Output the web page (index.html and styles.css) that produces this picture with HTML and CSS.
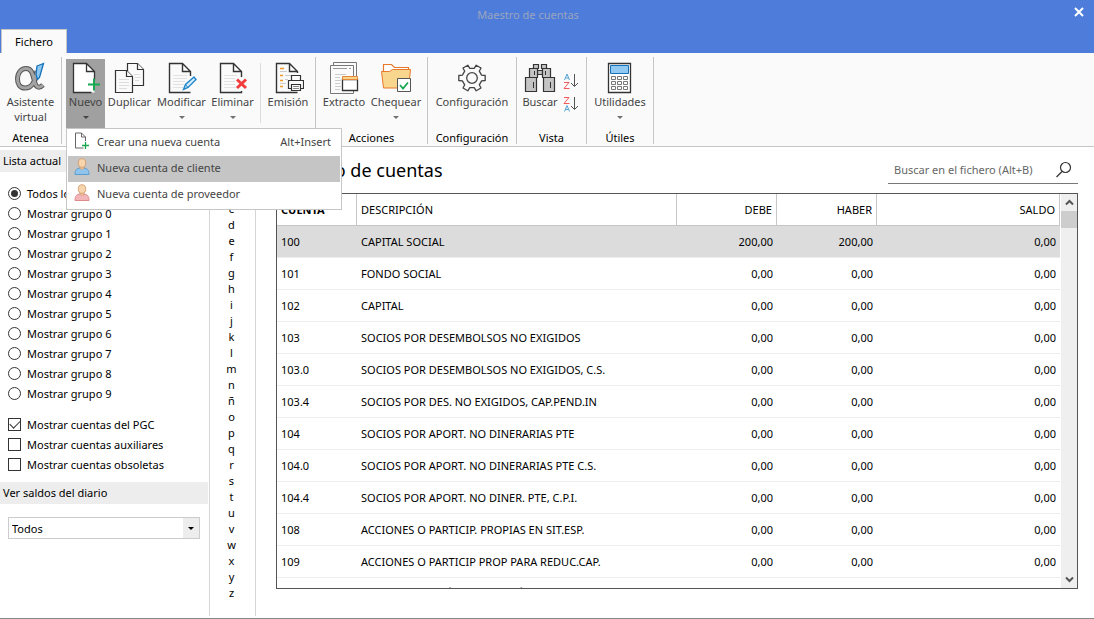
FILE: index.html
```html
<!DOCTYPE html>
<html lang="es">
<head>
<meta charset="utf-8">
<title>Maestro de cuentas</title>
<link rel="stylesheet" href="styles.css">
</head>
<body>
<header class="titlebar">
  <div class="caption">Maestro de cuentas</div>
  <button class="close" aria-label="Cerrar"><svg width="10" height="10" viewBox="0 0 10 10"><path d="M1 1l8 8M9 1l-8 8" stroke="#fff" stroke-width="2" fill="none"/></svg></button>
  <button class="tab">Fichero</button>
</header>

<nav class="ribbon">
  <section class="group g-atenea">
    <div class="tools">
      <button class="tool">
        <svg class="icon" viewBox="0 0 32 32"><path d="M22 9C20 20 17 26 10 26C5 26 2.500 22 2.500 17C2.500 11 6 6.500 11 6.500C18 6.500 18 15 20 21C21 25 24 27 28 23" fill="none" stroke="#555" stroke-width="5"/><path d="M22 9C20 20 17 26 10 26C5 26 2.500 22 2.500 17C2.500 11 6 6.500 11 6.500C18 6.500 18 15 20 21C21 25 24 27 28 23" fill="none" stroke="#a3a3a3" stroke-width="3"/><path d="M22 4l6.500-2.500-4 14-2 2-1.500-5z" fill="#8cc8f0" stroke="#1672b8" stroke-width="1.300"/></svg>
        <span>Asistente<br>virtual</span>
      </button>
    </div>
    <h2>Atenea</h2>
  </section>

  <section class="group g-edit">
    <div class="tools">
      <div class="menu-anchor">
        <button class="tool active" aria-expanded="true">
          <svg class="icon" viewBox="0 0 32 32"><path d="M3.500 1.500h13l8 8v21h-21z" fill="#fff"/><path d="M24.500 18V9.500l-8-8h-13v29h18M16.500 1.500v8h8" fill="none" stroke="#333" stroke-width="1.300"/><path d="M24 16.500v12M18 22.500h12" stroke="#18a851" stroke-width="2"/></svg>
          <span>Nuevo</span><i class="arrow"></i>
        </button>
        <div class="menu" role="menu">
          <button class="item" role="menuitem"><svg viewBox="0 0 18 18"><path d="M12.500 9V5l-4-4H2.500v15h8M8.500 1v4h4" fill="none" stroke="#666"/><path d="M12.500 10v7M9 13.500h7" stroke="#18a851" stroke-width="1.300"/></svg><span>Crear una nueva cuenta</span><kbd>Alt+Insert</kbd></button>
          <button class="item selected" role="menuitem"><svg viewBox="0 0 18 18"><path d="M2 16.500c0-5 2-6 5-6.500h4c3 .5 5 1.500 5 6.500z" fill="#8fc4ed" stroke="#5d9ed0"/><path d="M7 8v2.500q2 1.500 4 0V8z" fill="#f7d5ad" stroke="#cf9467" stroke-width=".7"/><ellipse cx="9" cy="5" rx="3.700" ry="4.300" fill="#f7d5ad" stroke="#cf9467" stroke-width=".8"/></svg><span>Nueva cuenta de cliente</span></button>
          <button class="item" role="menuitem"><svg viewBox="0 0 18 18"><path d="M2 16.500c0-5 2-6 5-6.500h4c3 .5 5 1.500 5 6.500z" fill="#f3b6b8" stroke="#df8a8d"/><path d="M7 8v2.500q2 1.500 4 0V8z" fill="#f7d5ad" stroke="#cf9467" stroke-width=".7"/><ellipse cx="9" cy="5" rx="3.700" ry="4.300" fill="#f7d5ad" stroke="#cf9467" stroke-width=".8"/></svg><span>Nueva cuenta de proveedor</span></button>
        </div>
      </div>
      <button class="tool w-dup">
        <svg class="icon" viewBox="0 0 32 32"><g fill="#fafafa" stroke="#333" stroke-width="1.200"><path d="M13.500 1.500h10l6 6v16h-16z"/><path d="M23.500 1.500v6h6"/><path d="M1.500 8.500h11l6 6v16h-17z"/><path d="M12.500 8.500v6h6"/></g><path d="M5 17.500h10M5 20.500h10M5 23.500h10M5 26.500h8M20 12.500h6M21 15.500h6M21 18.500h4" stroke="#ddd"/></svg>
        <span>Duplicar</span>
      </button>
      <button class="tool w-mod">
        <svg class="icon" viewBox="0 0 32 32"><path d="M24.500 14V9.500l-8-8h-13v29h21M16.500 1.500v8h8" fill="none" stroke="#333" stroke-width="1.400"/><path d="M7 13.500h14M7 16.500h14M7 19.500h12M7 22.500h11M7 25.500h10" stroke="#e2e2e2"/><path d="M17.500 27.500l2-5 8.500-7.500 2 2.500-8 8z" fill="#d6ecfa" stroke="#1f86ca" stroke-width="1.400"/><path d="M19.500 22.500l2.500 3" stroke="#1f86ca"/></svg>
        <span>Modificar</span><i class="arrow"></i>
      </button>
      <button class="tool w-del">
        <svg class="icon" viewBox="0 0 32 32"><path d="M24.500 15V9.500l-8-8h-13v29h21V29M16.500 1.500v8h8" fill="none" stroke="#333" stroke-width="1.400"/><path d="M7 13.500h13M7 16.500h11M7 19.500h11M7 22.500h11M7 25.500h12" stroke="#e2e2e2"/><path d="M20 17.500l9 8.500M29 17.500L20 26" stroke="#f23c3c" stroke-width="3"/></svg>
        <span>Eliminar</span><i class="arrow"></i>
      </button>
      <hr class="split">
      <button class="tool w-emi">
        <svg class="icon" viewBox="0 0 32 32"><path d="M25.500 11V9.500l-8-8h-13v29h21M17.500 1.500v8h8" fill="none" stroke="#333" stroke-width="1.400"/><path d="M8 6.500h4M8 13.500h3M8 18.500h3M8 24.500h3" stroke="#f09a28" stroke-width="1.300"/><path d="M8 9.500h7M13 13.500h6M13 17.500h3M8 21.500h6" stroke="#ccc"/><g fill="#fff" stroke="#333" stroke-width="1.200"><path d="M19.500 18.500v-5h9v5z"/><path d="M16.500 18.500h15v8h-15z"/><path d="M19.500 22.500h9v6h-9z"/></g><path d="M21 24.500h6M21 26.500h6" stroke="#888"/></svg>
        <span>Emisión</span>
      </button>
    </div>
  </section>

  <section class="group g-acc">
    <div class="tools">
      <button class="tool w-ext">
        <svg class="icon" viewBox="0 0 32 32"><g fill="#fafafa" stroke="#777"><path d="M5.500.5h23v28h-23z"/><path d="M2.500 3.500h23v28h-23z"/></g><path d="M5 6.500h14M21 6.500h2" stroke="#999"/><path d="M7 12.500h11M7 15.500h5M7 18.500h6M7 21.500h5M7 24.500h6M7 27.500h5" stroke="#ccc"/><path d="M14.500 17.500h15v11h-15z" fill="#fff" stroke="#333" stroke-width="1.300"/><path d="M14.500 14.500h15v3h-15z" fill="#f8d48b" stroke="#e5893a"/></svg>
        <span>Extracto</span>
      </button>
      <button class="tool w-che">
        <svg class="icon" viewBox="0 0 32 32"><path d="M3.500 9V2.500h8l3 3h14V9" fill="#fff" stroke="#e8792c" stroke-width="1.200"/><path d="M1.500 9.500h8l3-2h18l-2 18.500h-25z" fill="#f8d68e" stroke="#e8792c"/><path d="M17.500 16.500h13v13h-13z" fill="#fff" stroke="#555"/><path d="M20 23l3 3.500 5-6" fill="none" stroke="#18a851" stroke-width="1.800"/></svg>
        <span>Chequear</span><i class="arrow"></i>
      </button>
    </div>
    <h2>Acciones</h2>
  </section>

  <section class="group g-conf">
    <div class="tools">
      <button class="tool">
        <svg class="icon" viewBox="0 0 32 32"><g fill="none" stroke="#444" stroke-width="1.300"><circle cx="16" cy="16" r="5.300"/><path stroke-linejoin="round" d="M29.200 13.500V18.500L25.600 18.900L23.300 22.800L25 26L20.200 28.800L18.200 25.700H13.800L11.800 28.800L7 26L8.700 22.800L6.400 18.900L2.800 18.500V13.500L6.400 13.100L8.700 9.200L7 6L11.800 3.200L13.800 6.300H18.200L20.200 3.200L25 6L23.300 9.200L25.600 13.100Z"/></g></svg>
        <span>Configuración</span>
      </button>
    </div>
    <h2>Configuración</h2>
  </section>

  <section class="group g-vista">
    <div class="tools">
      <button class="tool w-bus">
        <svg class="icon" viewBox="0 0 32 32"><g fill="#c5c4c4" stroke="#333" stroke-width="1.200"><path d="M13.500 8.500h5v4h-5z"/><path d="M9.500 2.500h5v4h-5zM17.500 2.500h5v4h-5zM5.500 6.500h8v9h-8zM18.500 6.500h8v9h-8zM1.500 15.500h11v14h-11zM19.500 15.500h11v14h-11z"/></g><path d="M10.500 9v4M21.500 9v4M9.500 20v6M26.500 20v6" stroke="#333"/></svg>
        <span>Buscar</span>
      </button>
      <div class="sorts">
        <button class="sort" aria-label="Orden ascendente"><svg viewBox="0 0 16 16"><path d="M1.500 7L4 1l2.500 6M2.500 5h3" fill="none" stroke="#54a3d5"/><path d="M1 9.500h5L1 15.500h5.500" fill="none" stroke="#f05a5a"/><path d="M11.500 1v12M8 10l3.500 3.500L15 10" fill="none" stroke="#555"/></svg></button>
        <button class="sort" aria-label="Orden descendente"><svg viewBox="0 0 16 16"><path d="M1 1.500h5L1 7.500h5.500" fill="none" stroke="#f05a5a"/><path d="M1.500 15.500L4 9.500l2.500 6M2.500 13.500h3" fill="none" stroke="#54a3d5"/><path d="M11.500 1v12M8 10l3.500 3.500L15 10" fill="none" stroke="#555"/></svg></button>
      </div>
    </div>
    <h2>Vista</h2>
  </section>

  <section class="group g-util">
    <div class="tools">
      <button class="tool">
        <svg class="icon" viewBox="0 0 32 32"><path d="M4.500 1.500h22v29h-22z" fill="#fff" stroke="#333" stroke-width="1.300"/><path d="M6.500 3.500h18v8h-18z" fill="#92c9f2" stroke="#1672b8"/><g fill="none" stroke="#777"><path d="M7.500 14.500h4v3h-4zM13.500 14.500h4v3h-4zM19.500 14.500h4v3h-4zM7.500 19.500h4v3h-4zM13.500 19.500h4v3h-4zM19.500 19.500h4v3h-4zM7.500 24.500h4v3h-4zM13.500 24.500h4v3h-4zM19.500 24.500h4v3h-4z"/></g></svg>
        <span>Utilidades</span><i class="arrow"></i>
      </button>
    </div>
    <h2>Útiles</h2>
  </section>
</nav>

<main class="workspace">
  <aside class="sidebar">
    <h3 class="bar">Lista actual</h3>
    <div class="options">
      <label><input type="radio" name="grupo" checked>Todos los grupos</label>
      <label><input type="radio" name="grupo">Mostrar grupo 0</label>
      <label><input type="radio" name="grupo">Mostrar grupo 1</label>
      <label><input type="radio" name="grupo">Mostrar grupo 2</label>
      <label><input type="radio" name="grupo">Mostrar grupo 3</label>
      <label><input type="radio" name="grupo">Mostrar grupo 4</label>
      <label><input type="radio" name="grupo">Mostrar grupo 5</label>
      <label><input type="radio" name="grupo">Mostrar grupo 6</label>
      <label><input type="radio" name="grupo">Mostrar grupo 7</label>
      <label><input type="radio" name="grupo">Mostrar grupo 8</label>
      <label><input type="radio" name="grupo">Mostrar grupo 9</label>
    </div>
    <div class="options checks">
      <label><input type="checkbox" checked>Mostrar cuentas del PGC</label>
      <label><input type="checkbox">Mostrar cuentas auxiliares</label>
      <label><input type="checkbox">Mostrar cuentas obsoletas</label>
    </div>
    <h3 class="bar"><label for="saldos">Ver saldos del diario</label></h3>
    <div class="combo">
      <select id="saldos"><option>Todos</option></select>
      <i class="combo-arrow"></i>
    </div>
  </aside>

  <ul class="letters">
    <li>a</li><li>b</li><li>c</li><li>d</li><li>e</li><li>f</li><li>g</li><li>h</li><li>i</li><li>j</li><li>k</li><li>l</li><li>m</li><li>n</li><li>ñ</li><li>o</li><li>p</li><li>q</li><li>r</li><li>s</li><li>t</li><li>u</li><li>v</li><li>w</li><li>x</li><li>y</li><li>z</li>
  </ul>

  <section class="content">
    <div class="heading">
      <h1>Maestro de cuentas</h1>
      <div class="search">
        <input type="text" placeholder="Buscar en el fichero (Alt+B)" aria-label="Buscar en el fichero">
        <svg width="18" height="18" viewBox="0 0 18 18"><circle cx="10.500" cy="6.500" r="5" fill="none" stroke="#333" stroke-width="1.200"/><path d="M7 10.500L1.500 16" stroke="#333" stroke-width="1.300"/></svg>
      </div>
    </div>
    <div class="grid">
      <div class="rows">
        <table>
          <colgroup><col class="c-cuenta"><col class="c-desc"><col class="c-num"><col class="c-num"><col class="c-saldo"></colgroup>
          <thead><tr><th class="sorted">CUENTA</th><th>DESCRIPCIÓN</th><th>DEBE</th><th>HABER</th><th>SALDO</th></tr></thead>
          <tbody>
            <tr class="current"><td>100</td><td>CAPITAL SOCIAL</td><td>200,00</td><td>200,00</td><td>0,00</td></tr>
            <tr><td>101</td><td>FONDO SOCIAL</td><td>0,00</td><td>0,00</td><td>0,00</td></tr>
            <tr><td>102</td><td>CAPITAL</td><td>0,00</td><td>0,00</td><td>0,00</td></tr>
            <tr><td>103</td><td>SOCIOS POR DESEMBOLSOS NO EXIGIDOS</td><td>0,00</td><td>0,00</td><td>0,00</td></tr>
            <tr><td>103.0</td><td>SOCIOS POR DESEMBOLSOS NO EXIGIDOS, C.S.</td><td>0,00</td><td>0,00</td><td>0,00</td></tr>
            <tr><td>103.4</td><td>SOCIOS POR DES. NO EXIGIDOS, CAP.PEND.IN</td><td>0,00</td><td>0,00</td><td>0,00</td></tr>
            <tr><td>104</td><td>SOCIOS POR APORT. NO DINERARIAS PTE</td><td>0,00</td><td>0,00</td><td>0,00</td></tr>
            <tr><td>104.0</td><td>SOCIOS POR APORT. NO DINERARIAS PTE C.S.</td><td>0,00</td><td>0,00</td><td>0,00</td></tr>
            <tr><td>104.4</td><td>SOCIOS POR APORT. NO DINER. PTE, C.P.I.</td><td>0,00</td><td>0,00</td><td>0,00</td></tr>
            <tr><td>108</td><td>ACCIONES O PARTICIP. PROPIAS EN SIT.ESP.</td><td>0,00</td><td>0,00</td><td>0,00</td></tr>
            <tr><td>109</td><td>ACCIONES O PARTICIP PROP PARA REDUC.CAP.</td><td>0,00</td><td>0,00</td><td>0,00</td></tr>
            <tr><td>110</td><td>PRIMA DE EMISIÓN O ASUNCIÓN</td><td>0,00</td><td>0,00</td><td>0,00</td></tr>
          </tbody>
        </table>
      </div>
      <div class="scrollbar">
        <button aria-label="Subir"><svg width="9" height="7" viewBox="0 0 9 7"><path d="M1 5.500l3.500-3.500L8 5.500" fill="none" stroke="#555" stroke-width="2"/></svg></button>
        <div class="thumb"></div>
        <button aria-label="Bajar"><svg width="9" height="7" viewBox="0 0 9 7"><path d="M1 1.500L4.500 5L8 1.500" fill="none" stroke="#555" stroke-width="2"/></svg></button>
      </div>
    </div>
  </section>
</main>
</body>
</html>
```
FILE: styles.css
```css
* { box-sizing: border-box; }
body {
  margin: 0;
  height: 100vh;
  display: flex;
  flex-direction: column;
  font-family: "Noto Sans", "Open Sans", sans-serif;
  font-size: 11px;
  line-height: 15px;
  color: #000;
  background: #fff;
  border-bottom: 1px solid #888;
  overflow: hidden;
}
button, input, select { font: inherit; color: inherit; }
button { border: 0; padding: 0; background: none; }
h1, h2, h3, ul { margin: 0; padding: 0; font-weight: 400; font-size: inherit; }

.titlebar {
  flex: none;
  display: grid;
  grid-template-columns: 30px 1fr 30px;
  grid-template-rows: 29px 24px;
  background: #4d7cdb;
}
.caption { grid-column: 2; align-self: center; text-align: center; color: #9aa5bd; padding-right: 38px; }
.close { grid-column: 3; padding-bottom: 5px; }
.tab {
  grid-row: 2;
  grid-column: 1 / 3;
  justify-self: start;
  width: 66px;
  margin-left: 1px;
  background: #fafafa;
  border: 1px solid #c6c6c6;
  border-bottom: 0;
}

.ribbon {
  flex: none;
  display: flex;
  padding: 4px 0 2px;
  background: #fafafa;
  border-bottom: 1px solid #c6c6c6;
}
.group {
  display: flex;
  flex-direction: column;
  height: 87px;
  border-right: 1px solid #c6c6c6;
}
.group h2 { padding-top: 2px; text-align: center; }
.g-atenea { width: 62px; }
.g-edit { width: 254px; padding-left: 4px; }
.g-acc { width: 112px; }
.g-acc .tools { padding-left: 2px; }
.g-conf { width: 89px; }
.g-vista { width: 70px; }
.g-util { width: 67px; }
.tools { display: flex; padding-top: 2px; }
.tool {
  display: flex;
  flex-direction: column;
  align-items: center;
  flex: 1;
  height: 69px;
  padding-top: 3px;
  color: #444;
  white-space: nowrap;
}
.icon { width: 32px; height: 32px; flex: none; }
.arrow {
  margin-top: 7px;
  border: 3px solid transparent;
  border-top-color: #707070;
  border-bottom: 0;
}
.active { width: 39px; background: #a0a0a0; }
.active .arrow { border-top-color: #444; }
.menu-anchor { position: relative; display: flex; }
.w-dup { flex: 0 0 49px; }
.w-mod { flex: 0 0 55px; }
.w-del { flex: 0 0 47px; }
.w-emi { flex: 0 0 50px; }
.w-ext, .w-che { flex: 0 0 52px; }
.w-bus { flex: 0 0 46px; }
.split { width: 1px; height: 60px; margin: 4px 2px 0 4px; border: 0; background: #dcdcdc; }
.sorts { display: flex; flex-direction: column; gap: 7px; padding-top: 14px; }
.sort, .sort svg { display: block; width: 16px; height: 16px; }

.menu {
  position: absolute;
  z-index: 5;
  top: 69px;
  left: 0;
  width: 276px;
  padding: 1px;
  background: #fff;
  border: 1px solid #c6c6c6;
}
.item {
  display: flex;
  align-items: center;
  width: 100%;
  height: 26px;
  padding: 0 9px 4px 5px;
  gap: 6px;
  color: #444;
  text-align: left;
}
.item svg { width: 18px; height: 18px; }
.item span { flex: 1; }
.item kbd { font: inherit; }
.selected { background: #c5c5c5; }

.workspace { flex: 1; min-height: 0; display: flex; padding-bottom: 2px; }
.sidebar { flex: 0 0 210px; padding: 3px 1px 0 0; border-right: 1px solid #d5d5d5; }
.bar { height: 22px; padding: 3px; background: #ededed; }
.options { display: flex; flex-direction: column; padding: 11px 8px 0; }
.checks { padding-bottom: 8px; padding-top: 11px; }
.options label { display: flex; align-items: center; gap: 6px; height: 20px; }
.options input {
  appearance: none;
  display: grid;
  place-items: center;
  width: 13px;
  height: 13px;
  margin: 0;
  background: #fff;
  border: 1px solid #333;
}
.options input[type="radio"] { border-radius: 50%; }
.options input[type="radio"]:checked::before { content: ""; width: 7px; height: 7px; border-radius: 50%; background: #333; }
.options input[type="checkbox"]:checked::before {
  content: "";
  width: 9px;
  height: 5px;
  margin-bottom: 2px;
  border: solid #333;
  border-width: 0 0 1px 1px;
  transform: rotate(-45deg);
}
.combo { display: flex; margin: 13px 8px 0; height: 22px; border: 1px solid #ccc; }
.combo select { appearance: none; flex: 1; border: 0; padding: 0 3px; background: #fff; }
.combo-arrow { display: grid; place-items: center; width: 16px; background: #ededed; }
.combo-arrow::before { content: ""; border: 3px solid transparent; border-top-color: #000; border-bottom: 0; }

.letters {
  flex: 0 0 46px;
  padding: 22px 2px 0 0;
  list-style: none;
  text-align: center;
  line-height: 16px;
  border-right: 1px solid #d5d5d5;
}

.content { flex: 1; min-width: 0; display: flex; flex-direction: column; padding: 9px 16px 27px 20px; }
.heading { display: flex; justify-content: space-between; padding-bottom: 9px; }
h1 { font-size: 18px; line-height: 28px; }
.search { display: flex; align-items: center; width: 190px; padding: 0 5px 0 6px; border-bottom: 1px solid #777; }
.search input { flex: 1; min-width: 0; border: 0; padding: 0; outline: 0; background: none; }
.search input::placeholder { color: #666; opacity: 1; }

.grid { flex: 1; min-height: 0; display: flex; border: 1px solid #555; }
.rows { flex: 1; min-width: 0; overflow: hidden; }
table { width: 100%; table-layout: fixed; border-collapse: separate; border-spacing: 0; }
.c-cuenta { width: 80px; }
.c-desc { width: 320px; }
.c-num { width: 100px; }
th, td { height: 32px; padding: 0 4px; text-align: right; font-weight: 400; border-bottom: 1px solid #ededed; white-space: nowrap; }
th { border-bottom-color: #c6c6c6; border-right: 1px solid #c6c6c6; }
th.sorted { font-weight: 700; }
th:nth-child(-n+2), td:nth-child(-n+2) { text-align: left; }
.current td { background: #dcdcdc; }
.scrollbar { width: 17px; display: flex; flex-direction: column; background: #efefef; border-left: 1px solid #fff; }
.scrollbar button { height: 17px; display: grid; place-items: center; }
.thumb { height: 17px; margin-bottom: auto; background: #cdcdcd; }
```
